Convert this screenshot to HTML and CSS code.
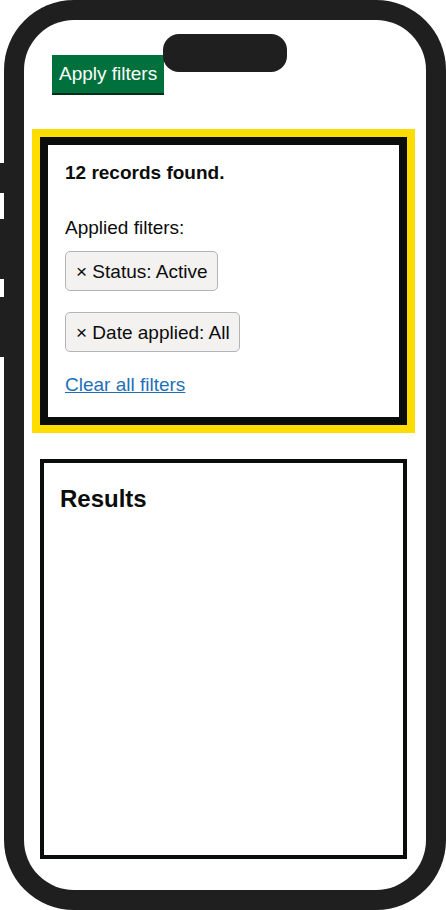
FILE: index.html
```html
<!DOCTYPE html>
<html lang="en">
<head>
<meta charset="utf-8">
<title>Filters</title>
<link rel="stylesheet" href="styles.css">
</head>
<body>
<div class="phone">
  <span class="side-btn side-btn-mute"></span>
  <span class="side-btn side-btn-up"></span>
  <span class="side-btn side-btn-down"></span>
  <div class="screen">
    <div class="island"></div>
    <button class="apply-btn" type="button">Apply filters</button>
    <div class="filter-panel">
      <p class="count">12 records found.</p>
      <p class="applied-label">Applied filters:</p>
      <div class="tags">
        <span class="tag">× Status: Active</span>
        <span class="tag">× Date applied: All</span>
      </div>
      <a class="clear-link" href="#">Clear all filters</a>
    </div>
    <section class="results">
      <h2 class="results-title">Results</h2>
    </section>
  </div>
</div>
</body>
</html>
```

FILE: styles.css
```css
html, body {
  margin: 0;
  padding: 0;
  background: #ffffff;
}

body {
  font-family: "Liberation Sans", Arial, sans-serif;
  color: #0b0c0c;
}

.phone {
  position: relative;
  box-sizing: border-box;
  width: 442px;
  height: 910px;
  margin-left: 4px;
  padding: 20px;
  background: #1f1f1f;
  border-radius: 70px;
}

.side-btn {
  position: absolute;
  left: -4px;
  width: 4px;
  background: #1f1f1f;
}

.side-btn-mute { top: 163px; height: 30px; }
.side-btn-up { top: 219px; height: 60px; }
.side-btn-down { top: 297px; height: 60px; }

.screen {
  position: relative;
  box-sizing: border-box;
  height: 870px;
  padding: 35px 19px 0 16px;
  background: #ffffff;
  border-radius: 50px;
  overflow: hidden;
  display: flex;
  flex-direction: column;
  align-items: stretch;
}

.island {
  position: absolute;
  top: 14px;
  left: 139px;
  width: 124px;
  height: 38px;
  background: #1f1f1f;
  border-radius: 16px;
  z-index: 2;
}

.apply-btn {
  align-self: flex-start;
  margin: 0 0 44px 12px;
  padding: 6px 7px 7px;
  border: 0;
  border-radius: 0;
  background: #00703c;
  box-shadow: 0 2px 0 #002d18;
  color: #ffffff;
  font-family: "Liberation Sans", Arial, sans-serif;
  font-size: 19px;
  line-height: 25px;
  cursor: pointer;
}

.filter-panel {
  border: 8px solid #0b0c0c;
  outline: 8px solid #ffdd00;
  padding: 15px 17px 20px;
  display: flex;
  flex-direction: column;
  align-items: flex-start;
  font-size: 19px;
  line-height: 25px;
}

.count {
  margin: 0 0 30px;
  font-weight: 700;
}

.applied-label {
  margin: 0 0 11px;
}

.tags {
  display: flex;
  flex-direction: column;
  align-items: flex-start;
  gap: 21px;
  margin-bottom: 20px;
}

.tag {
  display: inline-block;
  padding: 7px 9px 6px 10px;
  border: 1px solid #b1b4b6;
  border-radius: 5px;
  background: #f3f2f1;
  color: #0b0c0c;
}

.clear-link {
  color: #1d70b8;
  text-decoration: underline;
  text-decoration-thickness: 1px;
}

.results {
  margin-top: 34px;
  height: 400px;
  box-sizing: border-box;
  border: 4px solid #0b0c0c;
  padding: 21px 16px;
}

.results-title {
  margin: 0;
  font-size: 24px;
  line-height: 30px;
  font-weight: 700;
}
```
